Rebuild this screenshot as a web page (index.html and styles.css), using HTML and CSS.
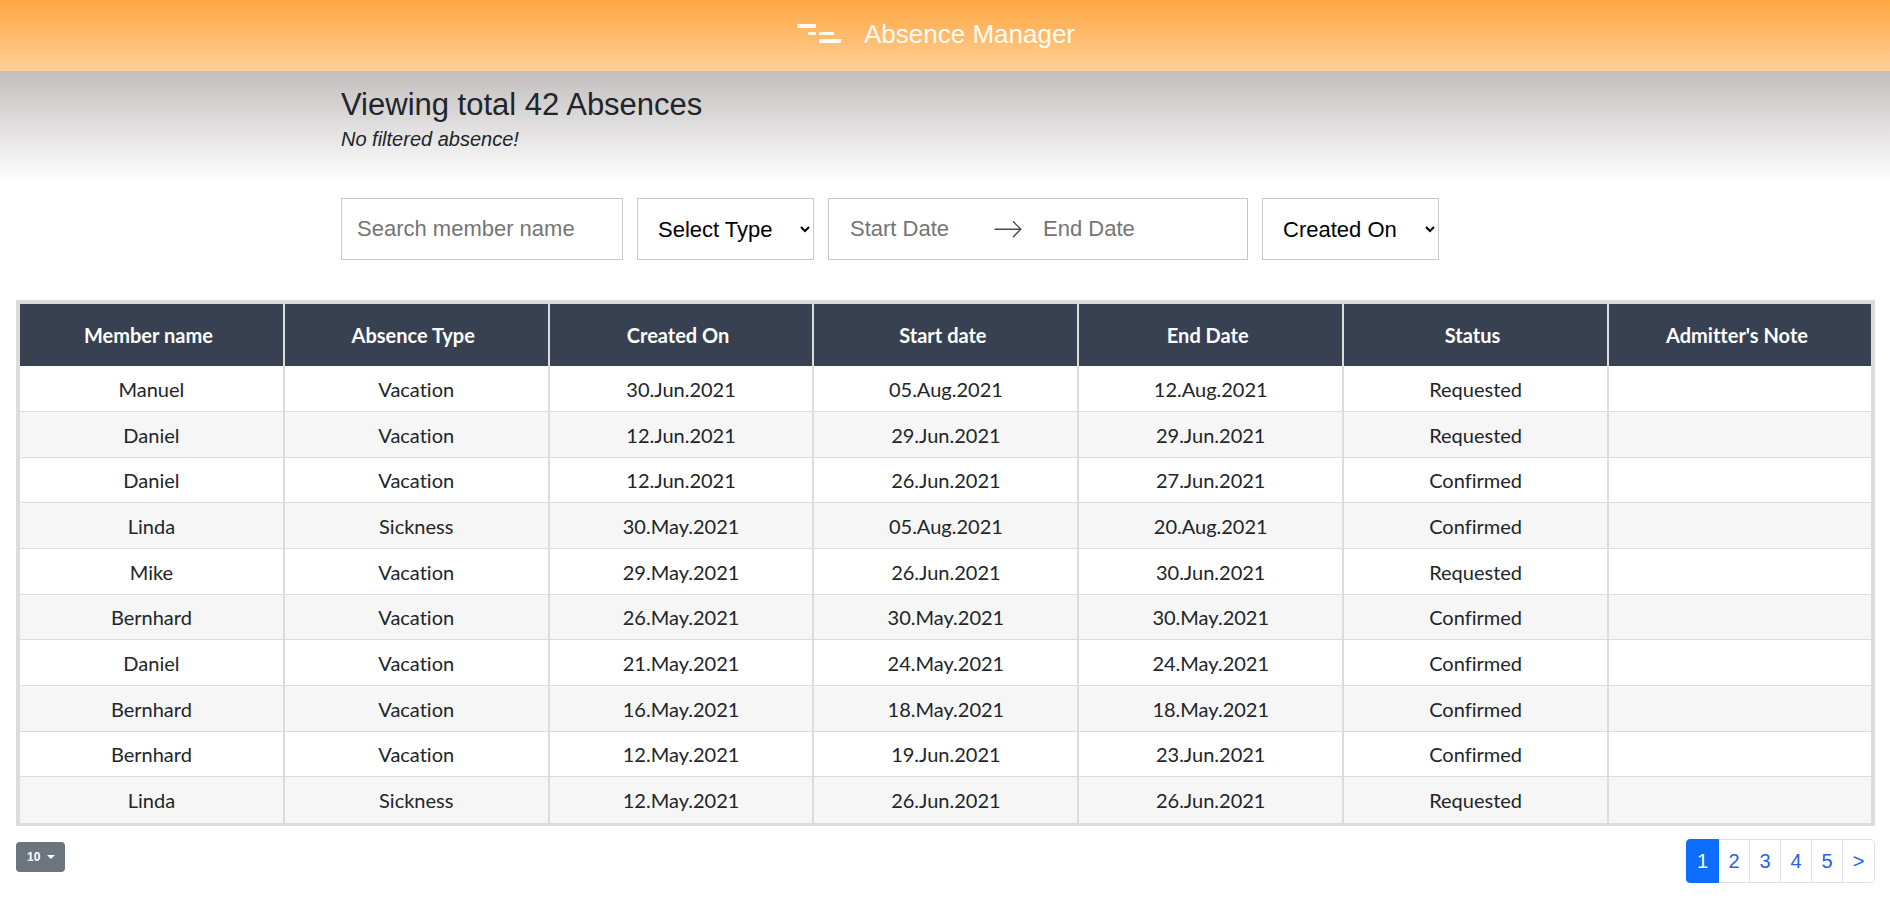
FILE: index.html
```html
<!DOCTYPE html>
<html lang="en">
<head>
<meta charset="utf-8">
<meta name="viewport" content="width=device-width, initial-scale=1">
<title>Absence Manager</title>
<link rel="stylesheet" href="styles.css">
</head>
<body>
<header class="topbar">
  <svg class="logo" viewBox="0 0 45 20" width="45" height="20" aria-hidden="true">
    <g fill="#fffaf2">
      <rect x="0" y="0" width="19" height="4" rx="1"/>
      <rect x="11" y="8" width="8" height="3" rx="1"/>
      <rect x="22" y="8" width="15" height="3" rx="1"/>
      <rect x="22" y="15" width="22" height="4" rx="1"/>
    </g>
  </svg>
  <span class="brand">Absence Manager</span>
</header>

<section class="summary">
  <div class="container">
    <h1 class="summary-title">Viewing total 42 Absences</h1>
    <p class="summary-note">No filtered absence!</p>
  </div>
</section>

<form class="container filters">
  <input class="field search" type="text" placeholder="Search member name" aria-label="Search member name">
  <select class="field select" aria-label="Absence type"><option>Select Type</option><option>Vacation</option><option>Sickness</option></select>
  <div class="field dates">
    <input class="date-input" type="text" placeholder="Start Date" aria-label="Start Date">
    <svg class="arrow" viewBox="0 0 1000 1000" width="30" height="30" aria-hidden="true"><path d="M694 242l249 250c12 11 12 21 1 32L694 773c-5 5-10 7-16 7s-11-2-16-7c-11-11-11-21 0-32l210-210H68c-13 0-23-10-23-23s10-23 23-23h806L662 275c-21-22 11-54 32-33z"/></svg>
    <input class="date-input" type="text" placeholder="End Date" aria-label="End Date">
  </div>
  <select class="field select" aria-label="Sort by"><option>Created On</option><option>Start Date</option><option>End Date</option></select>
</form>

<main class="content">
  <table class="absences">
    <thead>
      <tr><th>Member name</th><th>Absence Type</th><th>Created On</th><th>Start date</th><th>End Date</th><th>Status</th><th>Admitter's Note</th></tr>
    </thead>
    <tbody>
      <tr><td>Manuel</td><td>Vacation</td><td>30.Jun.2021</td><td>05.Aug.2021</td><td>12.Aug.2021</td><td>Requested</td><td></td></tr>
      <tr><td>Daniel</td><td>Vacation</td><td>12.Jun.2021</td><td>29.Jun.2021</td><td>29.Jun.2021</td><td>Requested</td><td></td></tr>
      <tr><td>Daniel</td><td>Vacation</td><td>12.Jun.2021</td><td>26.Jun.2021</td><td>27.Jun.2021</td><td>Confirmed</td><td></td></tr>
      <tr><td>Linda</td><td>Sickness</td><td>30.May.2021</td><td>05.Aug.2021</td><td>20.Aug.2021</td><td>Confirmed</td><td></td></tr>
      <tr><td>Mike</td><td>Vacation</td><td>29.May.2021</td><td>26.Jun.2021</td><td>30.Jun.2021</td><td>Requested</td><td></td></tr>
      <tr><td>Bernhard</td><td>Vacation</td><td>26.May.2021</td><td>30.May.2021</td><td>30.May.2021</td><td>Confirmed</td><td></td></tr>
      <tr><td>Daniel</td><td>Vacation</td><td>21.May.2021</td><td>24.May.2021</td><td>24.May.2021</td><td>Confirmed</td><td></td></tr>
      <tr><td>Bernhard</td><td>Vacation</td><td>16.May.2021</td><td>18.May.2021</td><td>18.May.2021</td><td>Confirmed</td><td></td></tr>
      <tr><td>Bernhard</td><td>Vacation</td><td>12.May.2021</td><td>19.Jun.2021</td><td>23.Jun.2021</td><td>Confirmed</td><td></td></tr>
      <tr><td>Linda</td><td>Sickness</td><td>12.May.2021</td><td>26.Jun.2021</td><td>26.Jun.2021</td><td>Requested</td><td></td></tr>
    </tbody>
  </table>
  <footer class="table-footer">
    <button class="page-size" type="button">10<span class="caret"></span></button>
    <nav class="pagination" aria-label="Pages">
      <a class="page active" href="#" aria-current="page">1</a>
      <a class="page" href="#">2</a>
      <a class="page" href="#">3</a>
      <a class="page" href="#">4</a>
      <a class="page" href="#">5</a>
      <a class="page" href="#">&gt;</a>
    </nav>
  </footer>
</main>
</body>
</html>
```

FILE: styles.css
```css
* {
  box-sizing: border-box;
}

body {
  margin: 0;
  background: #fff;
  color: #212529;
  font-family: "Liberation Sans", Arial, sans-serif;
}

.topbar {
  display: flex;
  justify-content: center;
  align-items: center;
  gap: 22px;
  height: 71px;
  padding: 0 18px 4px 0;
  background: linear-gradient(#ffa740, #ffcf98);
}

.brand {
  color: #fffaf2;
  font-size: 26px;
  line-height: 32px;
}

.container {
  max-width: 1208px;
  margin: 0 auto;
}

.summary {
  padding: 15px 0 29px;
  background: linear-gradient(#c3bebe, #fff);
}

.summary-title {
  margin: 0;
  font-size: 31px;
  font-weight: 400;
  line-height: 38px;
}

.summary-note {
  margin: 0;
  font-size: 20px;
  font-style: italic;
  line-height: 30px;
}

.filters {
  display: flex;
  flex-wrap: wrap;
  gap: 14px;
  padding: 15px 0 40px;
}

.field {
  height: 62px;
  border: 1px solid #c8c8c8;
  border-radius: 0;
  background: #fff;
  color: #000;
  font-family: inherit;
  font-size: 22px;
}

.search {
  width: 282px;
  padding: 0 15px;
}

.select {
  width: 177px;
  padding: 0 2px 0 16px;
}

.dates {
  display: flex;
  align-items: center;
  width: 420px;
  padding: 0 21px;
}

.date-input {
  flex: 0 1 143px;
  min-width: 0;
  padding: 0;
  border: 0;
  font: inherit;
}

.field::placeholder,
.date-input::placeholder {
  color: #757575;
}

.arrow {
  flex: none;
  margin-right: 20px;
  fill: #484848;
}

.content {
  padding: 0 15px 0 16px;
}

.absences {
  width: 100%;
  table-layout: fixed;
  border: 4px solid #dcdcdc;
  border-bottom-width: 3px;
  border-spacing: 0;
  font-family: "Trebuchet MS", Lato, sans-serif;
  font-size: 20px;
  font-variant-ligatures: none;
  line-height: 24px;
  text-align: center;
}

.absences th,
.absences td {
  border-right: 2px solid #dcdcdc;
  border-bottom: 1px solid #dcdcdc;
}

.absences th:last-child,
.absences td:last-child {
  width: 262px;
  border-right: 0;
}

.absences th {
  height: 62px;
  padding: 0 6px 0 0;
  border-bottom: 0;
  background: #374151;
  color: #fff;
}

.absences td {
  height: 46px;
  padding: 0;
}

.absences tr:nth-child(3n) td {
  height: 45px;
}

.absences tr:last-child td {
  border-bottom: 0;
}

.absences tbody tr:nth-child(even) {
  background: #f6f6f6;
}

.table-footer {
  display: flex;
  justify-content: space-between;
  align-items: flex-start;
  padding: 13px 0 24px;
}

.page-size {
  display: flex;
  align-items: center;
  gap: 7px;
  height: 30px;
  margin-top: 3px;
  padding: 0 10px 0 11px;
  border: 0;
  border-radius: 4px;
  background: #6c757d;
  color: #fff;
  font-family: inherit;
  font-size: 12px;
  font-weight: 700;
}

.caret {
  border: 4px solid transparent;
  border-top-color: #fff;
  border-bottom: 0;
}

.pagination {
  display: flex;
  border: 1px solid #dee2e6;
  border-radius: 4px;
}

.page {
  width: 31px;
  border-right: 1px solid #dee2e6;
  color: #2a60e8;
  font-size: 20px;
  line-height: 42px;
  text-align: center;
  text-decoration: none;
}

.page:last-child {
  border-right: 0;
}

.page.active {
  width: 33px;
  margin: -1px 0 -1px -1px;
  border: 1px solid #0d6efd;
  border-radius: 4px 0 0 4px;
  background: #0d6efd;
  color: #fff;
}
```
